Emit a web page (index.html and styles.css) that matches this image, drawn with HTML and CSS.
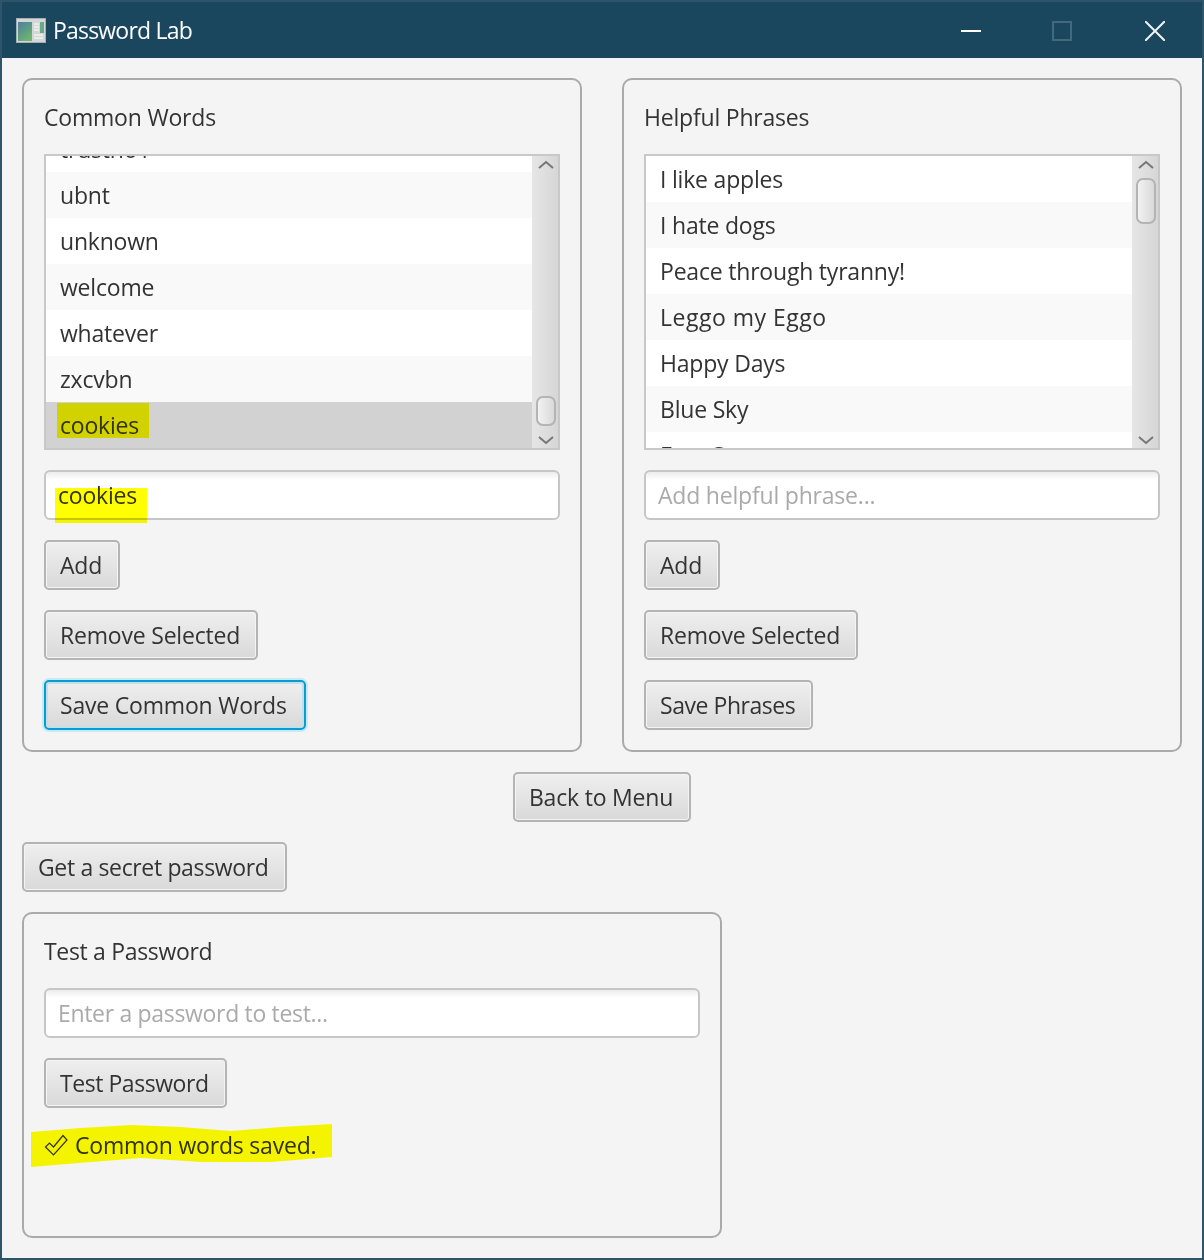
FILE: index.html
```html
<!DOCTYPE html>
<html>
    <head>
        <title>Password Lab</title>
        <link rel="stylesheet" href="styles.css">
    </head>
    <body>
        <div class="window">
            <div class="titlebar">
                <svg class="app-icon" width="30" height="25" viewBox="0 0 30 25">
                    <defs>
                        <linearGradient id="pane" x1="0" y1="0" x2="0.6" y2="1">
                            <stop offset="0" stop-color="#4f7fa8"/>
                            <stop offset="0.5" stop-color="#5a9a86"/>
                            <stop offset="1" stop-color="#6fb56e"/>
                        </linearGradient>
                    </defs>
                    <rect width="30" height="25" fill="#d3d7d7"/>
                    <rect x="0.5" y="0.5" width="29" height="24" fill="none" stroke="#a9aeae"/>
                    <rect x="2" y="4" width="14" height="19" fill="url(#pane)"/>
                    <rect x="24" y="4" width="4" height="11" fill="#6aa88a"/>
                    <path d="M18 6h5M18 9h5M18 12h5M18 17h9M18 20h9" stroke="#f2f4f4" stroke-width="1.5"/>
                </svg>
                <span class="app-title">Password Lab</span>
                <div class="winbtns">
                    <div class="winbtn winbtn-min"><svg width="20" height="20" viewBox="0 0 20 20"><path d="M0 10h20" stroke="#fff" stroke-width="2"/></svg></div>
                    <div class="winbtn winbtn-max"><svg width="20" height="20" viewBox="0 0 20 20"><rect x="1" y="1" width="18" height="18" fill="none" stroke="#44687c" stroke-width="2"/></svg></div>
                    <div class="winbtn"><svg width="20" height="20" viewBox="0 0 20 20"><path d="M0 0L20 20M20 0L0 20" stroke="#f0f3f5" stroke-width="2"/></svg></div>
                </div>
            </div>
            <div class="content">
                <div class="panels">
                    <div class="panel">
                        <div class="panel-title">Common Words</div>
                        <div class="list">
                            <div class="rows rows-scrolled">
                                <div class="row">trustno1</div>
                                <div class="row">ubnt</div>
                                <div class="row">unknown</div>
                                <div class="row">welcome</div>
                                <div class="row">whatever</div>
                                <div class="row">zxcvbn</div>
                                <div class="row selected"><span class="mark mark-row">cookies</span></div>
                            </div>
                            <div class="scrollbar">
                                <div class="arrow arrow-up"><svg width="16" height="10" viewBox="0 0 16 10"><path d="M1 8L8 2L15 8" fill="none" stroke="#777" stroke-width="2"/></svg></div>
                                <div class="track track-end"><div class="thumb thumb-small"></div></div>
                                <div class="arrow arrow-down"><svg width="16" height="10" viewBox="0 0 16 10"><path d="M1 2L8 8L15 2" fill="none" stroke="#777" stroke-width="2"/></svg></div>
                            </div>
                        </div>
                        <div class="field"><span class="mark mark-field">cookies</span></div>
                        <div><button class="btn" type="button">Add</button></div>
                        <div><button class="btn" type="button">Remove Selected</button></div>
                        <div><button class="btn focused" type="button">Save Common Words</button></div>
                    </div>
                    <div class="panel">
                        <div class="panel-title">Helpful Phrases</div>
                        <div class="list">
                            <div class="rows">
                                <div class="row">I like apples</div>
                                <div class="row">I hate dogs</div>
                                <div class="row">Peace through tyranny!</div>
                                <div class="row wide">Leggo my Eggo</div>
                                <div class="row">Happy Days</div>
                                <div class="row">Blue Sky</div>
                                <div class="row">Free Sun</div>
                            </div>
                            <div class="scrollbar">
                                <div class="arrow arrow-up"><svg width="16" height="10" viewBox="0 0 16 10"><path d="M1 8L8 2L15 8" fill="none" stroke="#777" stroke-width="2"/></svg></div>
                                <div class="track"><div class="thumb thumb-large"></div></div>
                                <div class="arrow arrow-down"><svg width="16" height="10" viewBox="0 0 16 10"><path d="M1 2L8 8L15 2" fill="none" stroke="#777" stroke-width="2"/></svg></div>
                            </div>
                        </div>
                        <div class="field placeholder">Add helpful phrase...</div>
                        <div><button class="btn" type="button">Add</button></div>
                        <div><button class="btn" type="button">Remove Selected</button></div>
                        <div><button class="btn tight" type="button">Save Phrases</button></div>
                    </div>
                </div>
                <div class="center"><button class="btn" type="button">Back to Menu</button></div>
                <div><button class="btn snug" type="button">Get a secret password</button></div>
                <div class="panel test-panel">
                    <div class="panel-title snug">Test a Password</div>
                    <div class="field placeholder snug">Enter a password to test...</div>
                    <div><button class="btn tight" type="button">Test Password</button></div>
                    <div class="status mark mark-status">
                        <svg width="24" height="22" viewBox="0 0 24 22"><path d="M1.5 13L9.5 21L23 6L19 1.5L9.5 13L5.5 9Z" fill="none" stroke="#333" stroke-width="1.2"/></svg>
                        <span>Common words saved.</span>
                    </div>
                </div>
            </div>
        </div>
    </body>
</html>
```

FILE: styles.css
```css
body {
    margin: 0;
    padding: 0;
    font-family: "Open Sans", "Noto Sans", sans-serif;
    font-size: 23px;
    line-height: 34px;
    letter-spacing: -0.2px;
    color: #333;
}
.window {
    height: 1260px;
    box-sizing: border-box;
    display: flex;
    flex-direction: column;
    border: 2px solid #2d5468;
    background-color: #f4f4f4;
}
.titlebar {
    height: 56px;
    flex: none;
    display: flex;
    align-items: center;
    padding-left: 14px;
    background-color: #1a475e;
}
.app-icon {
    margin-right: 7px;
    margin-top: 1px;
}
.app-title {
    color: #fff;
    letter-spacing: -0.8px;
}
.winbtns {
    margin-left: auto;
    display: flex;
    padding-top: 1px;
    padding-right: 1px;
}
.winbtn {
    width: 92px;
    display: flex;
    justify-content: center;
}
.winbtn-min {
    width: 88px;
}
.winbtn-max {
    width: 94px;
}
.winbtn svg {
    display: block;
}
.content {
    flex: 1;
    display: flex;
    flex-direction: column;
    gap: 20px;
    padding: 20px;
}
.panels {
    display: flex;
    gap: 40px;
}
.panel {
    flex: 1;
    display: flex;
    flex-direction: column;
    gap: 20px;
    padding: 20px;
    border: 2px solid #aaa;
    border-radius: 10px;
}
.test-panel {
    width: 700px;
    box-sizing: border-box;
}
.center {
    display: flex;
    justify-content: center;
}
.list {
    height: 292px;
    display: flex;
    border: 2px solid #c8c8c8;
    background-color: #fff;
}
.rows {
    flex: 1;
    overflow: hidden;
}
.row {
    height: 46px;
    display: flex;
    align-items: center;
    padding-left: 14px;
    background-color: #fff;
}
.row:nth-child(even) {
    background-color: #f9f9f9;
}
.rows-scrolled .row:first-child {
    margin-top: -30px;
}
.row.selected {
    background-color: #d2d2d2;
}
.wide {
    letter-spacing: 0.5px;
}
.tight {
    letter-spacing: -0.45px;
}
.snug {
    letter-spacing: -0.32px;
}
.scrollbar {
    width: 26px;
    flex: none;
    display: flex;
    flex-direction: column;
    background: linear-gradient(to right, #e6e6e6, #d6d6d6);
}
.arrow {
    height: 22px;
    box-sizing: border-box;
    display: flex;
    justify-content: center;
    padding-left: 2px;
}
.arrow-up {
    align-items: flex-start;
    padding-top: 4px;
}
.arrow-down {
    align-items: flex-end;
    padding-bottom: 3px;
}
.track {
    flex: 1;
    display: flex;
    flex-direction: column;
    padding-left: 4px;
}
.track-end {
    justify-content: flex-end;
}
.thumb {
    width: 20px;
    box-sizing: border-box;
    border: 2px solid #b4b4b4;
    border-radius: 7px;
    background: linear-gradient(to right, #f2f2f2, #d9d9d9);
}
.thumb-small {
    height: 30px;
}
.thumb-large {
    height: 46px;
}
.field {
    height: 50px;
    box-sizing: border-box;
    display: flex;
    align-items: center;
    padding-left: 12px;
    border: 2px solid #c6c6c6;
    border-radius: 6px;
    background: linear-gradient(to bottom, #ececec, #fff 8px);
}
.placeholder {
    color: #aaa;
}
.btn {
    height: 50px;
    box-sizing: border-box;
    padding: 0 16px 0 14px;
    font: inherit;
    letter-spacing: -0.2px;
    color: #333;
    border: 2px solid #b4b4b4;
    border-radius: 5px;
    background: linear-gradient(to bottom, #efefef, #d9d9d9);
    box-shadow: inset 0 0 0 1px #f4f4f4;
}
.btn.tight {
    letter-spacing: -0.45px;
}
.btn.snug {
    letter-spacing: -0.35px;
}
.btn.focused {
    padding-right: 17px;
    border-color: #039ed3;
    box-shadow: 0 0 0 2px #cbe8f3, inset 0 0 0 2px #c5dfe9;
}
.mark {
    position: relative;
}
.mark::after {
    content: "";
    position: absolute;
    mix-blend-mode: multiply;
    background-color: #ff0;
}
.mark-row::after {
    left: -3px;
    top: -5px;
    width: 92px;
    height: 35px;
}
.mark-field::after {
    left: -3px;
    top: 10px;
    width: 92px;
    height: 35px;
}
.status {
    display: flex;
    align-items: center;
    gap: 7px;
    height: 34px;
}
.mark-status::after {
    left: -13px;
    top: -4px;
    width: 301px;
    height: 44px;
    clip-path: polygon(0 8px, 50px 4px, 100px 1px, 150px 3px, 200px 7px, 250px 3px, 301px 0, 301px 33px, 240px 38px, 170px 38px, 110px 34px, 60px 38px, 0 43px);
}
```
